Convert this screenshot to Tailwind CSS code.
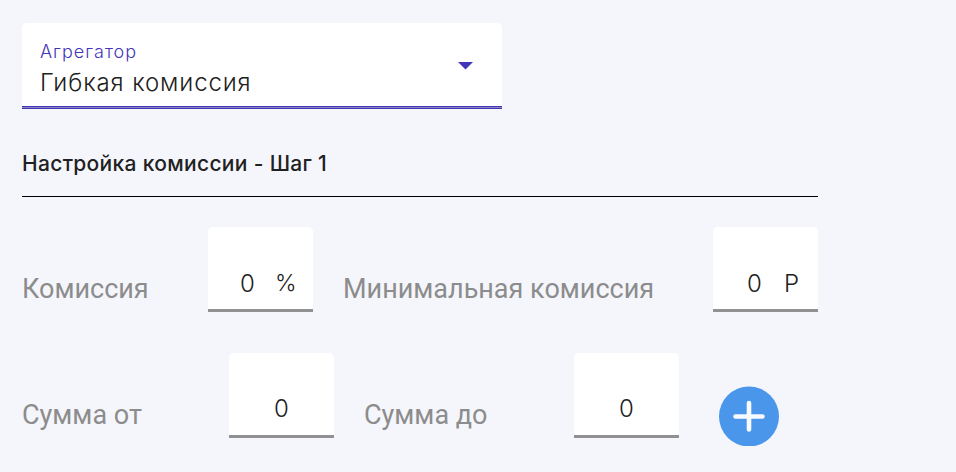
<!DOCTYPE html>
<html lang="ru">
<head>
    <meta charset="UTF-8">
    <meta name="viewport" content="width=device-width, initial-scale=1.0">
    <title>Настройка комиссии</title>
    <script src="https://cdn.jsdelivr.net/npm/@tailwindcss/browser@4"></script>
</head>
<body class="bg-[#f5f6fc] h-[472px] overflow-hidden font-['Inter',sans-serif] text-[#212121]">
    <main class="pl-[22px] pt-[23px]">
        <!-- Aggregator select -->
        <div class="w-[480px] h-[86px] bg-white rounded-t-[5px] flex flex-col">
            <div class="flex-1 flex items-start justify-between pl-[18px] pr-[29px]">
                <div class="pt-[16px]">
                    <div class="text-[18px] leading-[26px] font-light tracking-[1px] text-[#4335b8] whitespace-nowrap">Агрегатор</div>
                    <div class="text-[24px] leading-[35px] font-light tracking-[0.88px] whitespace-nowrap">Гибкая комиссия</div>
                </div>
                <svg class="w-[15px] h-[8px] mt-[39px]" viewBox="0 0 15 8"><path d="M0 0H15L7.5 7.5Z" fill="#4335b8"/></svg>
            </div>
            <div class="h-[3px] bg-[#8d87bd] border-y border-[#4335b8]"></div>
        </div>

        <!-- Step title -->
        <h2 class="mt-[39px] h-[49px] w-[796px] border-b border-black text-[21px] leading-[32px] font-medium tracking-[0.32px] whitespace-nowrap">Настройка комиссии - Шаг 1</h2>

        <!-- Commission row -->
        <div class="mt-[30px] flex h-[85px] text-[24px]">
            <div class="w-[186px] pt-[46px] font-[Roboto] text-[27px] leading-[32px] text-[#8c8c8c] whitespace-nowrap">Комиссия</div>
            <div class="w-[105px] bg-white rounded-t-[5px] border-b-3 border-[#919194] flex pt-[40px] leading-[33px] font-light">
                <span class="ml-[32px] w-[35px]">0</span>
                <span class="text-[23px]">%</span>
            </div>
            <div class="ml-[30px] w-[370px] pt-[46px] font-[Roboto] text-[27px] leading-[32px] text-[#8c8c8c] whitespace-nowrap">Минимальная комиссия</div>
            <div class="w-[105px] bg-white rounded-t-[5px] border-b-3 border-[#919194] flex pt-[40px] leading-[33px] font-light">
                <span class="ml-[34px] w-[37px]">0</span>
                <span class="text-[24px]">Р</span>
            </div>
        </div>

        <!-- Amount range row -->
        <div class="mt-[41px] flex h-[85px] text-[24px]">
            <div class="w-[207px] pt-[46px] font-[Roboto] text-[27px] leading-[32px] text-[#8c8c8c] whitespace-nowrap">Сумма от</div>
            <div class="w-[105px] bg-white rounded-t-[5px] border-b-3 border-[#919194] pt-[40px] leading-[32px] font-light text-center">0</div>
            <div class="ml-[30px] w-[210px] pt-[46px] font-[Roboto] text-[27px] leading-[32px] text-[#8c8c8c] whitespace-nowrap">Сумма до</div>
            <div class="w-[105px] bg-white rounded-t-[5px] border-b-3 border-[#919194] pt-[40px] leading-[32px] font-light text-center">0</div>
            <button class="ml-[40px] mt-[33px] size-[60px]" aria-label="Добавить">
                <svg class="block size-[60px]" viewBox="0 0 60 60">
                    <circle cx="30" cy="30.5" r="30" fill="#4996eb"/>
                    <path d="M30 17V43.5M16.5 30.5H43.5" stroke="#f7faff" stroke-width="4.6" stroke-linecap="round"/>
                </svg>
            </button>
        </div>
    </main>
</body>
</html>
